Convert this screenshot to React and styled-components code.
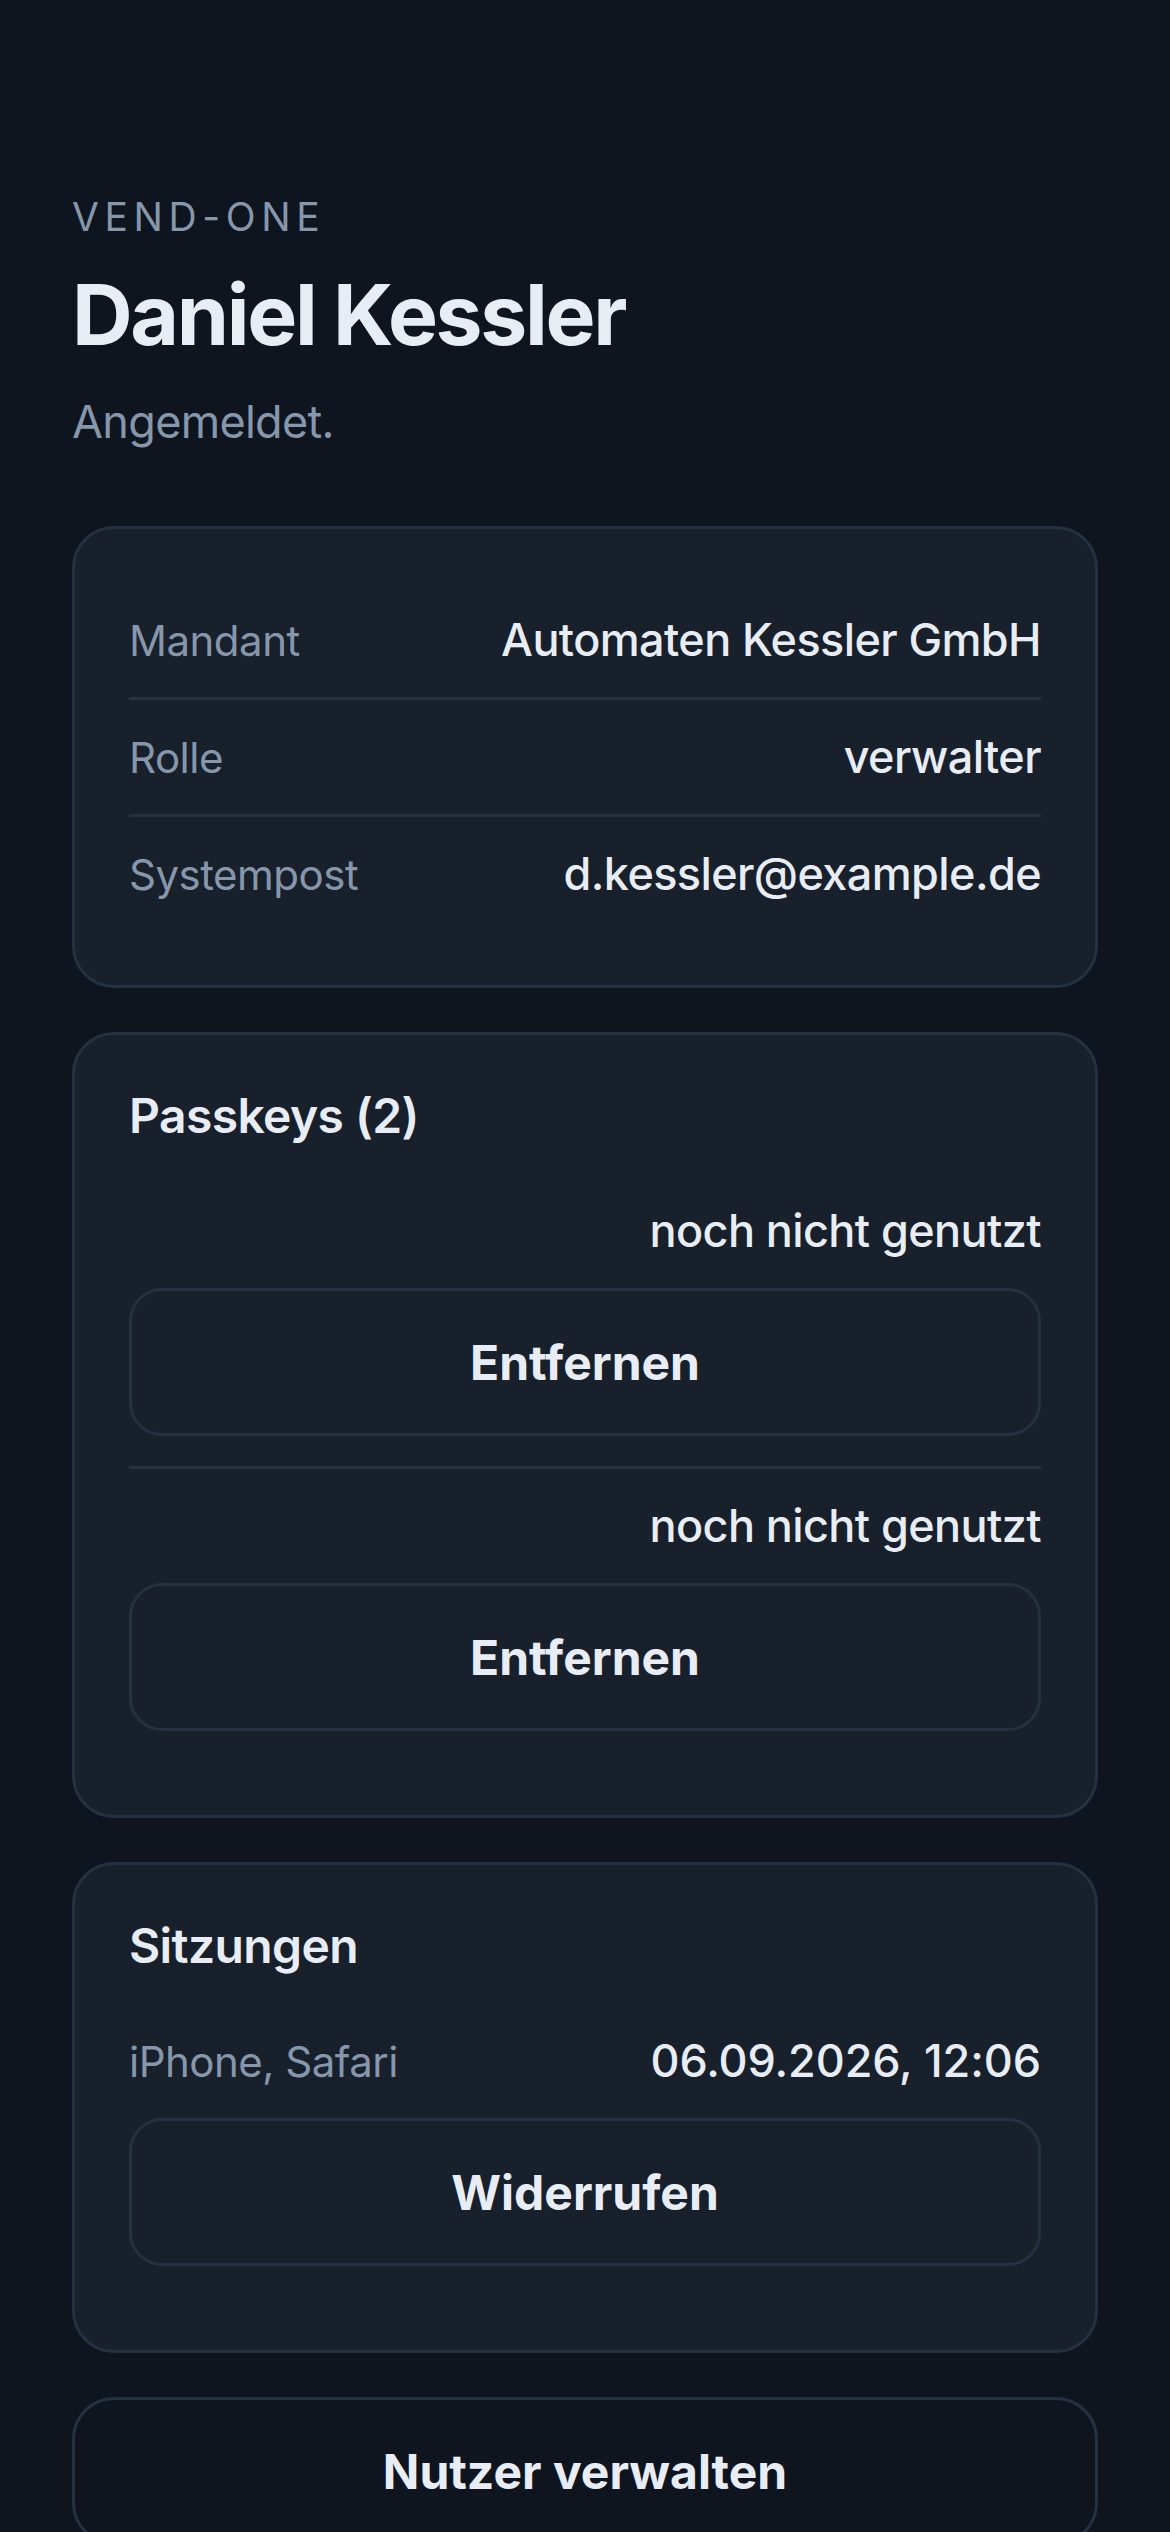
import React from "react";
import styled, { createGlobalStyle } from "styled-components";

const GlobalStyle = createGlobalStyle`
  html, body {
    margin: 0;
    padding: 0;
    background: #0e151f;
  }
  body {
    font-family: Inter, "Noto Sans", "Liberation Sans", sans-serif;
    color: #e8edf5;
    -webkit-font-smoothing: antialiased;
  }
  * { box-sizing: border-box; }
`;

const Page = styled.main`
  min-height: 2532px;
  padding: 193px 72px 0;
  display: flex;
  flex-direction: column;
`;

const Eyebrow = styled.div`
  font-size: 39px;
  line-height: 48px;
  font-weight: 400;
  letter-spacing: 5.6px;
  color: #8797ab;
  text-transform: uppercase;
`;

const Title = styled.h1`
  margin: 26px 0 0;
  font-size: 84px;
  line-height: 96px;
  font-weight: 700;
  letter-spacing: -2.3px;
  color: #e8edf5;
`;

const Subtitle = styled.p`
  margin: 32px 0 0;
  font-size: 45px;
  line-height: 54px;
  letter-spacing: -0.7px;
  color: #8797ab;
`;

const Stack = styled.div`
  margin-top: 77px;
  display: flex;
  flex-direction: column;
  gap: 44px;
`;

const Card = styled.section`
  background: #17202b;
  border: 3px solid #253140;
  border-radius: 42px;
  padding: 54px;
  display: flex;
  flex-direction: column;
`;

const SectionTitle = styled.h2`
  margin: 0 0 31px;
  font-size: 48px;
  line-height: 54px;
  font-weight: 600;
  letter-spacing: -0.6px;
  color: #e8edf5;
`;

const Row = styled.div`
  display: flex;
  flex-direction: ${(p) => (p.$stacked ? "column" : "row")};
  justify-content: space-between;
  align-items: ${(p) => (p.$stacked ? "stretch" : "baseline")};
  gap: 30px;
  padding: 30px 0;
  & + & {
    border-top: 3px solid #253140;
  }
`;

const Meta = styled.div`
  display: flex;
  justify-content: space-between;
  align-items: baseline;
  gap: 24px;
`;

const Label = styled.span`
  font-size: 42px;
  line-height: 52px;
  font-weight: 400;
  letter-spacing: -0.5px;
  color: #8797ab;
`;

const Value = styled.span`
  font-size: 45px;
  line-height: 54px;
  font-weight: 500;
  letter-spacing: ${(p) => (p.$numeric ? "-0.1px" : "-0.6px")};
  color: #e8edf5;
  text-align: right;
  margin-left: auto;
`;

const Button = styled.button`
  height: 148px;
  width: 100%;
  border: 3px solid #253140;
  border-radius: ${(p) => (p.$standalone ? "42px" : "33px")};
  background: ${(p) => (p.$standalone ? "#0e151f" : "#17202b")};
  color: #e8edf5;
  font-family: inherit;
  font-size: 48px;
  font-weight: 700;
  cursor: pointer;
`;

const info = [
  ["Mandant", "Automaten Kessler GmbH"],
  ["Rolle", "verwalter"],
  ["Systempost", "d.kessler@example.de"],
];

const passkeys = [
  { name: "", used: "noch nicht genutzt" },
  { name: "", used: "noch nicht genutzt" },
];

export default function App() {
  return (
    <>
      <GlobalStyle />
      <Page>
        <Eyebrow>Vend-One</Eyebrow>
        <Title>Daniel Kessler</Title>
        <Subtitle>Angemeldet.</Subtitle>
        <Stack>
          <Card>
            {info.map(([label, value]) => (
              <Row key={label}>
                <Label>{label}</Label>
                <Value>{value}</Value>
              </Row>
            ))}
          </Card>

          <Card>
            <SectionTitle>Passkeys (2)</SectionTitle>
            {passkeys.map((pk, i) => (
              <Row key={i} $stacked>
                <Meta>
                  <Label>{pk.name}</Label>
                  <Value>{pk.used}</Value>
                </Meta>
                <Button type="button">Entfernen</Button>
              </Row>
            ))}
          </Card>

          <Card>
            <SectionTitle>Sitzungen</SectionTitle>
            <Row $stacked>
              <Meta>
                <Label>iPhone, Safari</Label>
                <Value $numeric>06.09.2026, 12:06</Value>
              </Meta>
              <Button type="button">Widerrufen</Button>
            </Row>
          </Card>

          <Button type="button" $standalone>
            Nutzer verwalten
          </Button>
        </Stack>
      </Page>
    </>
  );
}
